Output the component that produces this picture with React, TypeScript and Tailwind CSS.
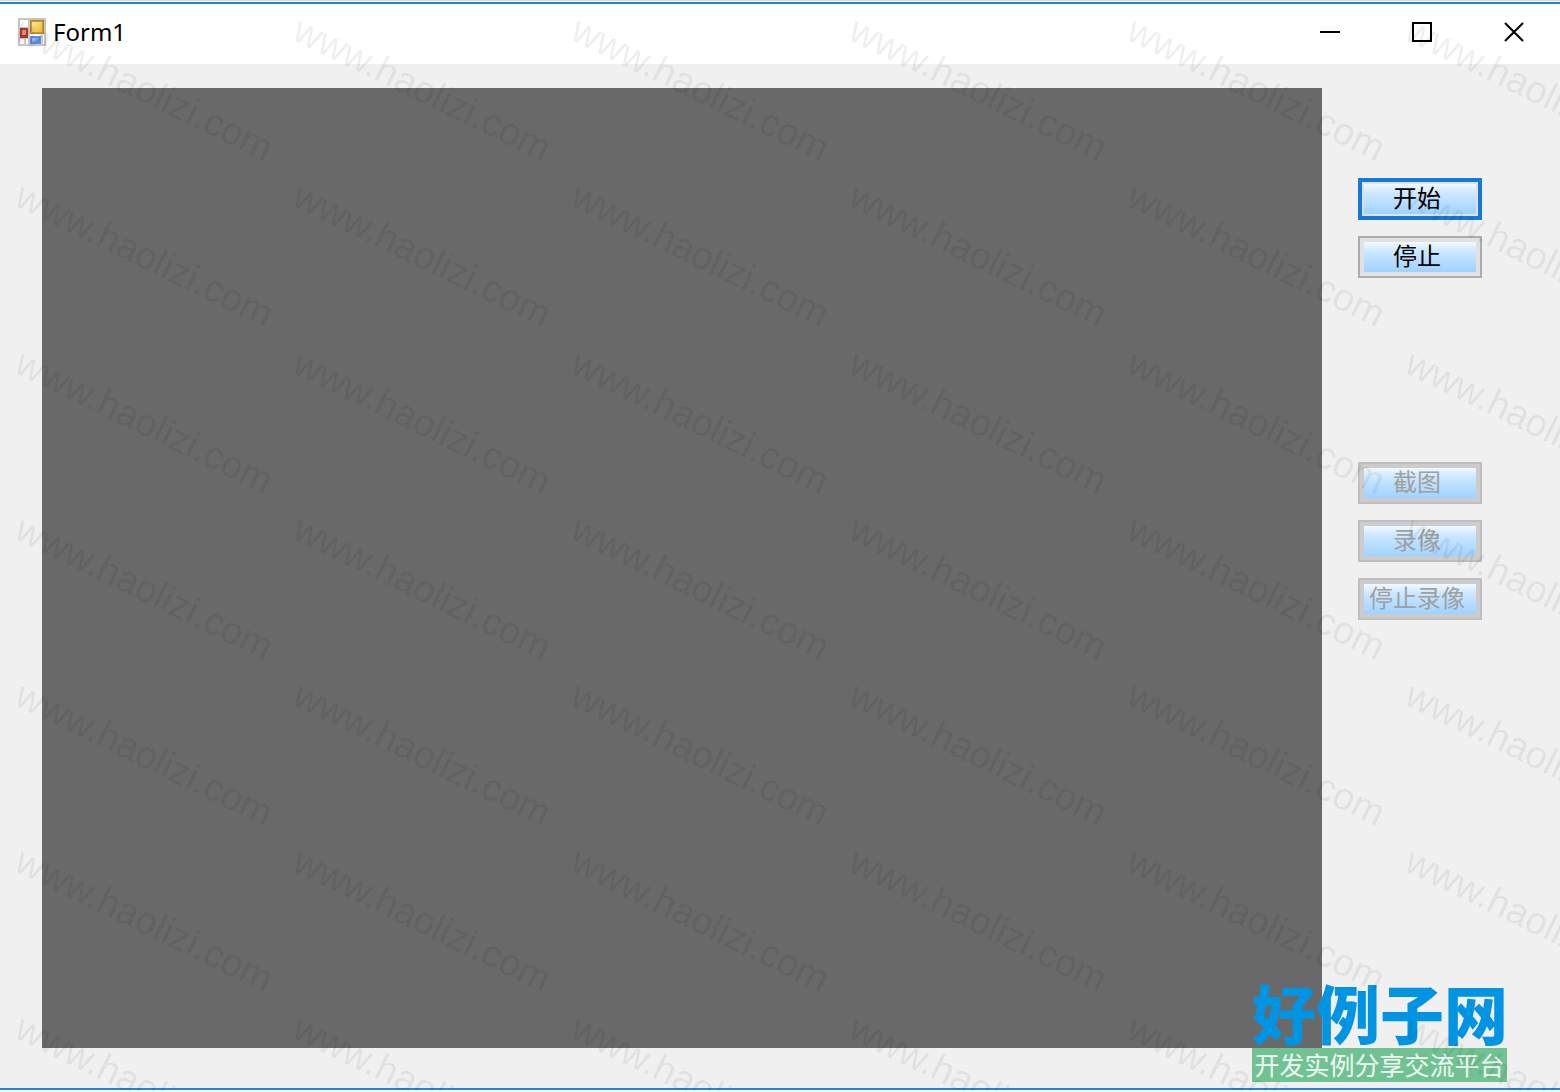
import React from "react";

interface FormButton {
  label: string;
  focused?: boolean;
  disabled?: boolean;
}

const playButtons: FormButton[] = [
  { label: "开始", focused: true },
  { label: "停止" },
];

const captureButtons: FormButton[] = [
  { label: "截图", disabled: true },
  { label: "录像", disabled: true },
  { label: "停止录像", disabled: true },
];

// 7 rows x 6 columns of the site mark
const marks = Array.from({ length: 42 }, (_, i) => i);

function ActionButton({ label, focused, disabled }: FormButton) {
  let frame = "border-2 border-[#adadad] bg-[#e1e1e1] p-1 text-black";
  if (focused) {
    frame = "border-4 border-[#1479d7] bg-[#e1e1e1] p-[2px] text-black";
  }
  if (disabled) {
    frame = "border-2 border-[#bfbfbf] bg-[#cccccc] p-1 text-[#a0a0a0]";
  }

  return (
    <button type="button" disabled={disabled} className={`h-[42px] w-full ${frame}`}>
      <span className="flex h-full items-center justify-center bg-linear-to-b from-[#f0f9ff] via-[#cde8ff] via-30% to-[#9fd2ff] pr-[6px] text-[24px] leading-[24px] whitespace-nowrap">
        {label}
      </span>
    </button>
  );
}

function FormIcon() {
  return (
    <svg width="28" height="28" viewBox="0 0 28 28" aria-hidden="true">
      <defs>
        <linearGradient id="gold" x1="0" y1="0" x2="1" y2="1">
          <stop offset="0" stopColor="#ffe9a0" />
          <stop offset="1" stopColor="#f0b428" />
        </linearGradient>
        <linearGradient id="blue" x1="0" y1="0" x2="1" y2="1">
          <stop offset="0" stopColor="#a8cbff" />
          <stop offset="1" stopColor="#4c86e0" />
        </linearGradient>
      </defs>
      <rect x="1" y="1" width="26" height="26" fill="#fff" stroke="#c4c4c4" strokeWidth="2" />
      <path d="M11 1v26M1 10h10M1 20h10M7 20v7M24 17v10" stroke="#c9c9c9" strokeWidth="2" />
      <rect x="12.5" y="2.5" width="13" height="13" fill="#cf9a24" stroke="#b08428" />
      <rect x="14" y="4" width="10" height="10" fill="url(#gold)" />
      <rect x="2.5" y="10.5" width="7" height="9" fill="#bd3026" stroke="#a63a32" />
      <rect x="4" y="12" width="4" height="5" fill="#e08a7a" />
      <rect x="12.5" y="18.5" width="10" height="7" fill="#5088de" stroke="#6a94d8" />
      <rect x="14" y="20" width="7" height="4" fill="url(#blue)" />
    </svg>
  );
}

function TitleBar() {
  return (
    <header className="flex h-[60px] items-center justify-between bg-white pb-1 pl-[18px]">
      <div className="flex items-center gap-[7px]">
        <FormIcon />
        <h1 className="font-['Noto_Sans',sans-serif] text-[24px] leading-[32px] text-black">
          Form1
        </h1>
      </div>
      <div className="flex h-full">
        <button type="button" aria-label="Minimize" className="flex w-[92px] items-center justify-center">
          <svg width="20" height="20" viewBox="0 0 20 20">
            <path d="M0 10h20" stroke="#000" strokeWidth="2" />
          </svg>
        </button>
        <button type="button" aria-label="Maximize" className="flex w-[92px] items-center justify-center">
          <svg width="20" height="20" viewBox="0 0 20 20">
            <rect x="1" y="1" width="18" height="18" fill="none" stroke="#000" strokeWidth="2" />
          </svg>
        </button>
        <button type="button" aria-label="Close" className="flex w-[92px] items-center justify-center">
          <svg width="20" height="20" viewBox="0 0 20 20">
            <path d="M1 1l18 18M19 1L1 19" stroke="#000" strokeWidth="2" />
          </svg>
        </button>
      </div>
    </header>
  );
}

export default function App() {
  return (
    <div className="relative min-h-screen overflow-hidden border-t border-[#d9dde2] bg-white py-px font-['Liberation_Sans','Noto_Sans_CJK_SC',sans-serif]">
      <div className="border-y-2 border-[#2186d6] bg-[#f0f0f0]">
        <TitleBar />

        <main className="flex gap-9 pt-6 pr-[78px] pb-10 pl-[42px]">
          <div className="aspect-[4/3] flex-1 bg-[#696969]" />

          <div className="flex w-[124px] flex-col gap-[184px] pt-[90px]">
            <div className="flex flex-col gap-4">
              {playButtons.map((b) => (
                <ActionButton key={b.label} {...b} />
              ))}
            </div>
            <div className="flex flex-col gap-4">
              {captureButtons.map((b) => (
                <ActionButton key={b.label} {...b} />
              ))}
            </div>
          </div>
        </main>
      </div>

      {/* Site logo */}
      <div className="absolute right-[53px] bottom-[10px] w-[255px] text-center font-['Noto_Sans_CJK_SC',sans-serif] whitespace-nowrap">
        <p className="pb-1 text-[64px] leading-[66px] font-black text-[#0094e2]">好例子网</p>
        <p className="h-[34px] bg-[#70c292] text-[25px] leading-[32px] text-white/90">
          开发实例分享交流平台
        </p>
      </div>

      {/* Watermark */}
      <div
        aria-hidden="true"
        className="pointer-events-none absolute top-[8px] left-[11px] grid h-[1164px] grid-cols-[repeat(6,278px)] grid-rows-7 text-[38px] leading-[40px] text-black/8 select-none"
      >
        {marks.map((i) => (
          <div key={i} className="pl-4">
            <span className="inline-block origin-top-left rotate-26">www.haolizi.com</span>
          </div>
        ))}
      </div>
    </div>
  );
}
